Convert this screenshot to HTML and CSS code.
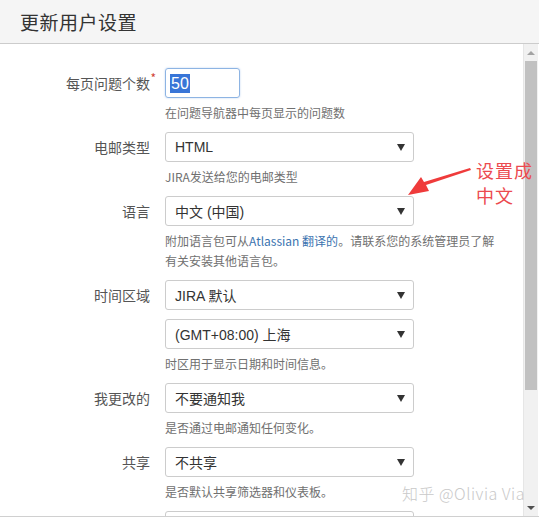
FILE: index.html
```
<!DOCTYPE html>
<html lang="zh-CN">
<head>
  <meta charset="UTF-8" />
  <title>更新用户设置</title>
  <link rel="stylesheet" href="styles.css">
</head>
<body>

  <div class="dialog">
    <!-- Cabecera -->
    <header class="dialog-header">
      <h2 class="dialog-title">更新用户设置</h2>
    </header>

    <!-- Cuerpo con formulario -->
    <div class="dialog-body">
      <form class="settings">
        <div class="field">
          <label class="field-label">每页问题个数<span class="req">*</span></label>
          <div class="control">
            <div class="text-input"><span class="selected">50</span></div>
            <div class="desc">在问题导航器中每页显示的问题数</div>
          </div>
        </div>

        <div class="field">
          <label class="field-label">电邮类型</label>
          <div class="control">
            <div class="select latin">HTML<span class="caret"></span></div>
            <div class="desc">JIRA发送给您的电邮类型</div>
          </div>
        </div>

        <div class="field">
          <label class="field-label">语言</label>
          <div class="control">
            <div class="select">中文 (中国)<span class="caret"></span></div>
            <div class="desc">附加语言包可从<a href="#">Atlassian 翻译的</a>。请联系您的系统管理员了解<br>有关安装其他语言包。</div>
          </div>
        </div>

        <div class="field">
          <label class="field-label">时间区域</label>
          <div class="control">
            <div class="select">JIRA 默认<span class="caret"></span></div>
            <div class="select">(GMT+08:00) 上海<span class="caret"></span></div>
            <div class="desc">时区用于显示日期和时间信息。</div>
          </div>
        </div>

        <div class="field">
          <label class="field-label">我更改的</label>
          <div class="control">
            <div class="select">不要通知我<span class="caret"></span></div>
            <div class="desc">是否通过电邮通知任何变化。</div>
          </div>
        </div>

        <div class="field">
          <label class="field-label">共享</label>
          <div class="control">
            <div class="select">不共享<span class="caret"></span></div>
            <div class="desc">是否默认共享筛选器和仪表板。</div>
          </div>
        </div>

        <div class="field">
          <label class="field-label"></label>
          <div class="control">
            <div class="select"><span class="caret"></span></div>
          </div>
        </div>
      </form>

      <!-- Barra de desplazamiento -->
      <div class="scrollbar">
        <div class="scroll-btn up"></div>
        <div class="scroll-track">
          <div class="scroll-thumb"></div>
        </div>
        <div class="scroll-btn down"></div>
      </div>
    </div>

    <div class="dialog-footer"></div>

    <!-- Anotación -->
    <div class="note">设置成<br>中文</div>
    <svg class="note-arrow" width="80" height="40" viewBox="0 0 80 40">
      <polygon points="70,4 71,6 26,21 29,27 8,31 21,13 24,18" fill="#ef3b3b"/>
    </svg>

    <div class="watermark">知乎 @Olivia Via</div>
  </div>

</body>
</html>
```

FILE: styles.css
```
/* ================================
   Base
================================= */
* {
  margin: 0;
  padding: 0;
  box-sizing: border-box;
}

body {
  font-family: "Liberation Sans", "Noto Sans CJK SC", sans-serif;
  color: #333;
  background: #fff;
  width: 539px;
  height: 519px;
  overflow: hidden;
}

a {
  color: #3b73af;
  text-decoration: none;
}

/* ================================
   Dialog
================================= */
.dialog {
  position: relative;
  height: 519px;
  display: flex;
  flex-direction: column;
}

.dialog-header {
  height: 44px;
  background: #f5f5f5;
  border-bottom: 1px solid #ccc;
  padding: 0 20px;
  display: flex;
  align-items: center;
}

.dialog-title {
  font-family: "Noto Sans CJK SC", sans-serif;
  font-weight: normal;
  font-size: 19px;
  color: #333;
  letter-spacing: 0.5px;
}

.dialog-body {
  height: 472px;
  display: flex;
  overflow: hidden;
}

.dialog-footer {
  flex: 1;
  border-top: 1px solid #d0d0d0;
}

/* ================================
   Form
================================= */
.settings {
  flex: 1;
  padding-top: 24px;
}

.field {
  display: grid;
  grid-template-columns: 150px 340px;
  column-gap: 15px;
  margin-bottom: 9px;
}

.field-label {
  position: relative;
  text-align: right;
  font-size: 14px;
  line-height: 30px;
  color: #555;
  font-family: "Noto Sans CJK SC", sans-serif;
}

.req {
  position: absolute;
  right: -6px;
  top: -5px;
  color: #d04437;
  font-size: 12px;
}

.control {
  display: flex;
  flex-direction: column;
  align-items: flex-start;
  gap: 9px;
}

.text-input {
  width: 75px;
  height: 30px;
  border: 1px solid #8db4e3;
  border-radius: 3px;
  box-shadow: 0 0 2px rgba(80,140,220,0.4);
  padding: 0 4px;
  display: flex;
  align-items: center;
  font-size: 16px;
}

.selected {
  background: #3875d7;
  color: #fff;
  line-height: 19px;
  padding: 0 1px;
}

.select {
  width: 249px;
  height: 30px;
  border: 1px solid #ccc;
  border-radius: 3px;
  padding: 0 8px 0 9px;
  display: flex;
  align-items: center;
  justify-content: space-between;
  font-size: 14px;
  color: #333;
  background: #fff;
}

.caret {
  width: 0;
  height: 0;
  border-left: 4px solid transparent;
  border-right: 4px solid transparent;
  border-top: 7px solid #333;
  margin-left: auto;
}

.desc {
  margin-top: -4px;
  font-size: 12px;
  line-height: 20px;
  color: #707070;
  font-family: "Noto Sans CJK SC", sans-serif;
  white-space: nowrap;
}

/* ================================
   Scrollbar falsa
================================= */
.scrollbar {
  width: 15px;
  margin-right: 1px;
  background: #f1f1f1;
  border-left: 1px solid #e6e6e6;
  display: flex;
  flex-direction: column;
}

.scroll-btn {
  height: 17px;
  display: flex;
  align-items: center;
  justify-content: center;
}

.scroll-btn.up::before,
.scroll-btn.down::before {
  content: "";
  border-left: 4px solid transparent;
  border-right: 4px solid transparent;
}

.scroll-btn.up::before {
  border-bottom: 4px solid #a3a3a3;
}

.scroll-btn.down::before {
  border-top: 4px solid #505050;
}

.scroll-track {
  flex: 1;
  padding: 0 1px;
}

.scroll-thumb {
  height: 329px;
  background: #c1c1c1;
}

/* ================================
   Anotaciones
================================= */
.note {
  position: absolute;
  left: 476px;
  top: 158px;
  font-family: "Noto Sans CJK SC", sans-serif;
  font-size: 18px;
  line-height: 25px;
  color: #ec4a4f;
  letter-spacing: 1px;
}

.note-arrow {
  position: absolute;
  left: 400px;
  top: 164px;
}

.watermark {
  position: absolute;
  left: 402px;
  top: 481px;
  font-family: "Noto Sans CJK SC", sans-serif;
  font-size: 16px;
  font-weight: 300;
  color: #c9c9c9;
  letter-spacing: 0.5px;
}
```
